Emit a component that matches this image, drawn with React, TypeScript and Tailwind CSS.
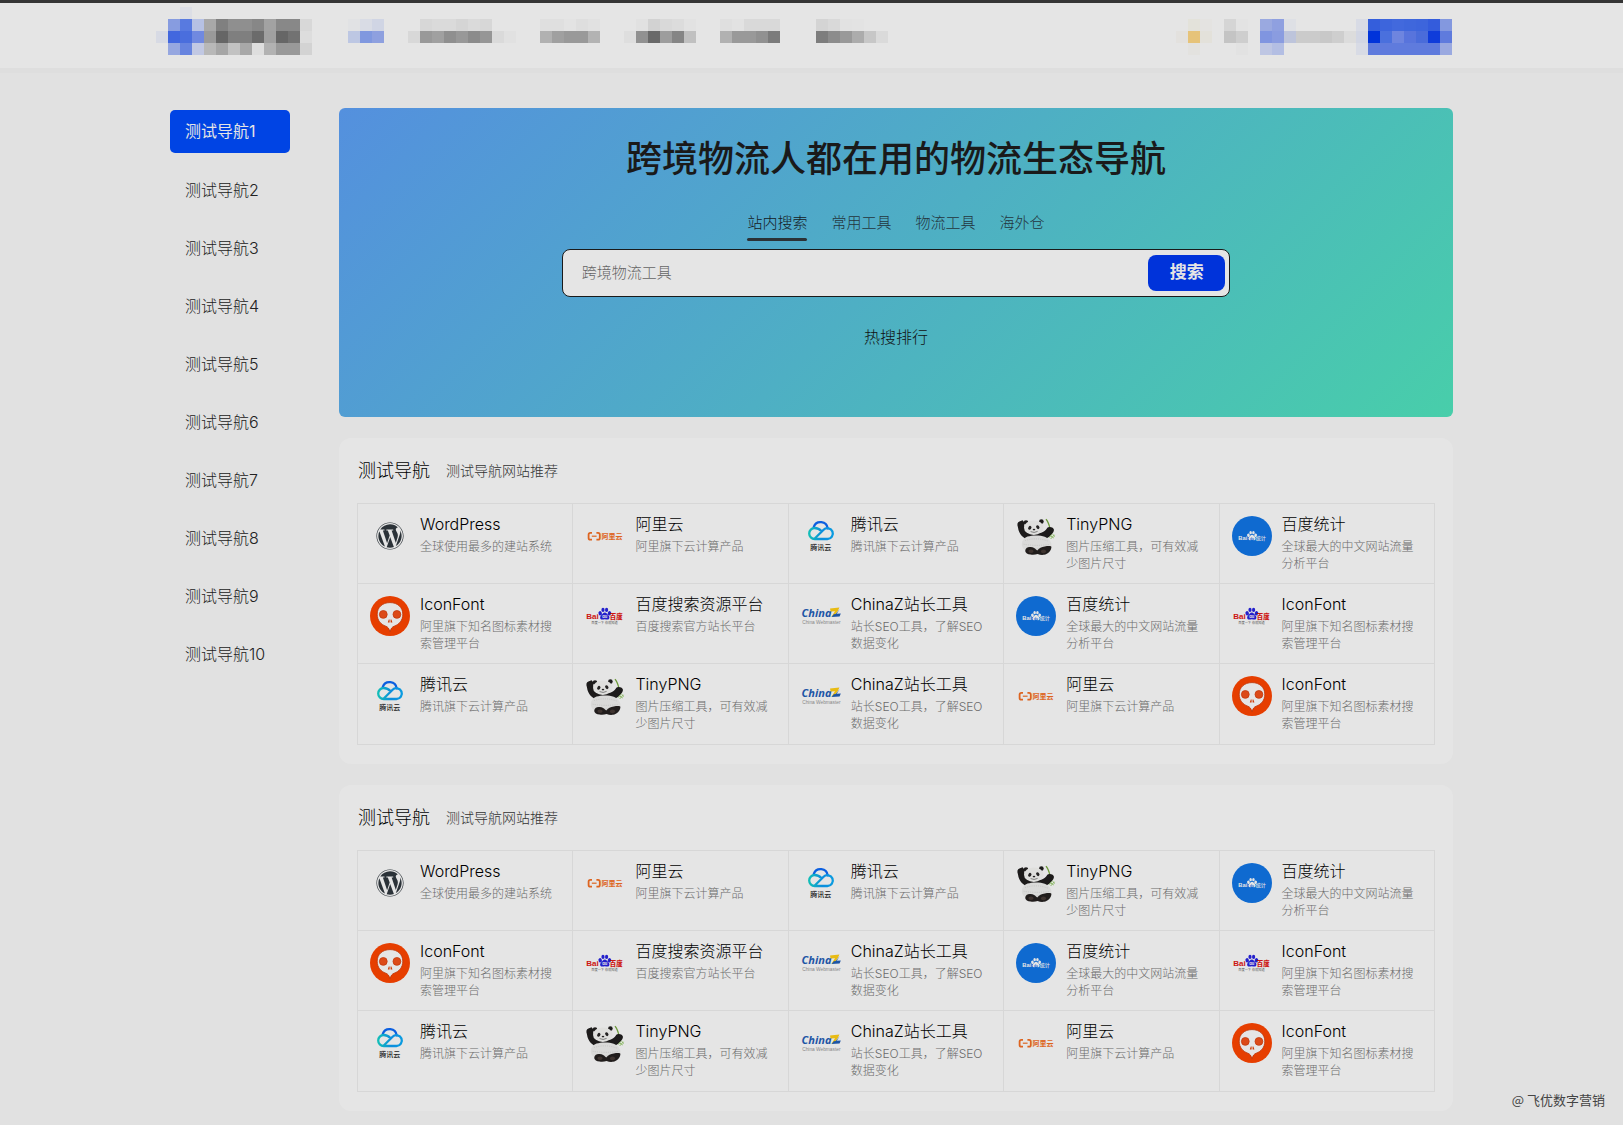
import type { ReactNode } from 'react'
import { FaWordpress } from 'react-icons/fa'

type SiteKey = 'wordpress' | 'aliyun' | 'tencent' | 'tinypng' | 'tongji' | 'iconfont' | 'baidu' | 'chinaz'

interface Site {
  name: string
  desc: string
  icon: ReactNode
}

const navItems = Array.from({ length: 10 }, (_, i) => `测试导航${i + 1}`)
const searchTabs = ['站内搜索', '常用工具', '物流工具', '海外仓']

const CELL = 12

// One string per row, colours separated by spaces, "-" leaves a cell empty
function Mosaic({ rows }: { rows: string[] }) {
  const cells = rows.map((row) => row.split(' '))
  const width = cells[0].length * CELL
  const height = cells.length * CELL
  return (
    <svg width={width} height={height} viewBox={`0 0 ${width} ${height}`} shapeRendering="crispEdges" aria-hidden="true">
      {cells.map((row, y) =>
        row.map((fill, x) =>
          fill === '-' ? null : <rect key={`${x}-${y}`} x={x * CELL} y={y * CELL} width={CELL} height={CELL} fill={fill} />
        )
      )}
    </svg>
  )
}

const logoRows = [
  '- - #dcdee5 - - - - - - - - - -',
  '- #879ce0 #587ae0 #b6c1e4 #a8a8a8 #808080 #8f8f8f #8f8f8f #878787 #a2a2a2 #888888 #888888 #d8d8d8',
  '#d7dae4 #4267de #4a6edd #7089e0 #9a9a9a #666666 #7f7f7f #7f7f7f #6b6b6b #a0a0a0 #666666 #727272 #dddddd',
  '- #96a7e0 #6784df #c1c8e3 #b8b8b8 #a6a6a6 #c2c2c2 #a8a8a8 #dedede #b2b2b2 #999999 #999999 #d3d3d3',
]

const menuRows = [
  ['#e1e2e4 #d9dce5 #d0d5e4', '#bdc7e3 #8098df #8ea0df', '- - -'],
  [
    '- #d7d7d7 #dadada #dadada #d5d5d5 #dadada #d7d7d7 - -',
    '#d8d8d8 #999999 #a0a0a0 #8f8f8f #989898 #8b8b8b #969696 #dadada #e1e1e1',
    '- - - - - - - - -',
  ],
  ['#dfdfdf #dfdfdf #e3e3e3 #dedede #e1e1e1', '#b1b1b1 #a0a0a0 #999999 #999999 #b3b3b3', '- - - - -'],
  ['- #e1e1e1 #d2d2d2 #d9d9d9 #dcdcdc #e2e2e2', '#dedede #919191 #696969 #9d9d9d #858585 #c0c0c0', '- - - - - -'],
  ['#dfdfdf #e2e2e2 #d9d9d9 #d9d9d9 #d9d9d9', '#b1b1b1 #999999 #999999 #919191 #7b7b7b', '- - - - -'],
  ['#d4d4d4 #d9d9d9 #e2e2e2 #e3e3e3 - -', '#7d7d7d #8c8c8c #999999 #acacac #c7c7c7 #dadada', '- - - - - -'],
]

const toolRows = [
  ['- #e3e2da #e4e3e1', '#e3e1de #e6c379 #e3e1da', '- #e3e2df -'],
  ['#d5d5d5 #e3e3e3', '#c4c4c4 #cecece', '- #e2e2e2'],
  [
    '#9aa9e0 #8fa0e0 #dee0e5 - - - - -',
    '#8095e0 #8a9ce0 #bdc4db #cbcbcb #cbcbcb #c8c8c8 #cecece #dcdcdc',
    '#bec6e3 #b3bee3 - - - - - -',
  ],
  [
    '#d8dbe5 #345edc #3d65dc #4269dd #3f67dc #3d65dc #345cdc #8398df',
    '#d2d6e3 #0033da #4a70dd #6e85df #5874dc #4a6cda #0f3cda #5f7bdd',
    '#d8dbe5 #5f7bdd #5f7bdd #5f7bdd #5f7bdd #5f7bdd #5f7bdd #9aa9e0',
  ],
]

function AliyunLogo() {
  return (
    <svg viewBox="0 0 40 40" className="size-10">
      <g fill="none" stroke="#dd6420" strokeWidth="1.8">
        <path d="M7 16.8H5.4Q3.6 16.8 3.6 18.6v3.3Q3.6 23.7 5.4 23.7H7" />
        <path d="M11.4 16.8H13Q14.8 16.8 14.8 18.6v3.3Q14.8 23.7 13 23.7h-1.6" />
        <path d="M6.8 20.2h4.8" strokeWidth="1.2" />
      </g>
      <text x="16.6" y="23" fontSize="7" fontWeight="700" fill="#dd6420">阿里云</text>
    </svg>
  )
}

function TencentLogo({ id }: { id: string }) {
  return (
    <svg viewBox="0 0 40 40" className="size-10">
      <defs>
        <linearGradient id={id} x1="0" x2="1" y1="0" y2="0">
          <stop offset="0" stopColor="#12bdb8" />
          <stop offset="0.55" stopColor="#0c8ddd" />
          <stop offset="1" stopColor="#0a9be0" />
        </linearGradient>
      </defs>
      <g fill="none" strokeWidth="2.3" strokeLinecap="round">
        <path d="M12.8 10.8a7.2 7.2 0 0 1 13.9 1.6" stroke="#0c5fe0" />
        <path d="M20.6 15.2C18.3 12.7 16.2 12 13.7 12a5.5 5.5 0 0 0 0 11h12.7a5.4 5.4 0 1 0-3.8-9.2L13.5 22.8" stroke={`url(#${id})`} />
      </g>
      <text x="19.8" y="34" fontSize="7" fontWeight="500" textAnchor="middle" fill="#222222">腾讯云</text>
    </svg>
  )
}

function Paw({ fill }: { fill: string }) {
  return (
    <g fill={fill}>
      <ellipse cx="15.2" cy="17.3" rx="1.7" ry="2.2" transform="rotate(-20 15.2 17.3)" />
      <ellipse cx="18" cy="13.9" rx="1.6" ry="2.1" />
      <ellipse cx="21.6" cy="13.9" rx="1.6" ry="2.1" />
      <ellipse cx="24.4" cy="17.3" rx="1.7" ry="2.2" transform="rotate(20 24.4 17.3)" />
      <path d="M19.8 16.6c1.7 0 2.3 1.5 3.5 2.6 1.7 1.5 1.5 4.1-.6 4.4-1 .1-1.8-.3-2.9-.3s-1.9.4-2.9.3c-2.1-.3-2.3-2.9-.6-4.4 1.2-1.1 1.8-2.6 3.5-2.6z" />
    </g>
  )
}

function BaiduLogo() {
  return (
    <svg viewBox="0 0 40 40" className="size-10">
      <text x="1.2" y="22.7" fontSize="8" fontWeight="700" fill="#cc1512" fontFamily="Liberation Sans">Bai</text>
      <Paw fill="#2420cc" />
      <text x="19.8" y="22.4" fontSize="4" fontWeight="700" textAnchor="middle" fill="#e5e5e5">du</text>
      <text x="24.8" y="22.9" fontSize="6.4" fontWeight="900" fill="#cc1512">百度</text>
      <text x="19.5" y="28.2" fontSize="3.2" textAnchor="middle" fill="#555555">百度一下 你就知道</text>
    </svg>
  )
}

function TongjiLogo() {
  return (
    <svg viewBox="0 0 40 40" className="size-10">
      <circle cx="20" cy="20" r="20" fill="#0f6ad0" />
      <text x="6.3" y="23.9" fontSize="5.8" fontWeight="700" fill="#e5e5e5" fontFamily="Liberation Sans">Bai</text>
      <g transform="translate(4.6 5.8) scale(.78)">
        <Paw fill="#e5e5e5" />
      </g>
      <text x="20" y="23.5" fontSize="3" fontWeight="700" textAnchor="middle" fill="#0f6ad0">du</text>
      <text x="23.8" y="23.9" fontSize="5" fontWeight="500" fill="#e5e5e5">统计</text>
    </svg>
  )
}

function ChinazLogo() {
  return (
    <svg viewBox="0 0 40 40" className="size-10">
      <text x="0.6" y="21.2" fontSize="11" fontWeight="700" fontStyle="italic" fill="#1d55a5" fontFamily="Open Sans">China</text>
      <path d="M29 12.4l9.4-.8-1.2 2.6-4 6.2-2.8.4 3.6-5.6-4.4.3z" fill="#e8bb13" />
      <path d="M38.6 13.2l-2.8 4.6 4-.3-1.2 2.9-8 .6 2.2-2.8 2-.2z" fill="#1d55a5" />
      <text x="1.2" y="28" fontSize="4.8" fill="#888888" fontFamily="Liberation Sans">China Webmaster</text>
    </svg>
  )
}

function IconFontLogo() {
  return (
    <svg viewBox="0 0 40 40" className="size-10">
      <circle cx="20" cy="20" r="20" fill="#e63e00" />
      <path d="M20 6.6c7.6 0 12.8 4.8 12.8 11.6 0 6.2-3.6 10.2-8.6 12-2.2.9-3.2 2.1-4.2 5.6-1-3.5-2-4.7-4.2-5.6-5-1.8-8.6-5.8-8.6-12C7.2 11.4 12.4 6.6 20 6.6z" fill="#e5e5e5" stroke="#bd3000" strokeWidth=".8" />
      <circle cx="13.3" cy="18.4" r="3.9" fill="#dc4a18" stroke="#c43a0c" strokeWidth=".8" />
      <circle cx="26.9" cy="18.4" r="3.9" fill="#dc4a18" stroke="#c43a0c" strokeWidth=".8" />
      <path d="M17.8 26.4l1-3h.8v3zM22.4 26.4l-1-3h-.8v3z" fill="#cf3800" />
    </svg>
  )
}

function PandaLogo() {
  return (
    <svg viewBox="0 0 40 40" className="size-10">
      <path d="M30 3.2c2.2 2.600 3.200 5.800 4 9.400" fill="none" stroke="#6d9a3a" strokeWidth="1.3" />
      <path d="M2 11.5C.8 8.4 1.4 6.4 3.4 5.6l3.2-1.4 1.8 2.4c-.6 3.2.2 5.8 2.6 7.8l14 2.4c2.8-.8 4.6-2.4 6.2-4.8 1.2-1.6 5.6-1.4 6.6 1.2.8 2-2 5.6-4.6 7.6-2 1.6-4.6 2.8-7.6 3.2H12.4C7.4 22.4 2.8 18.2 2 11.5z" fill="#1d1b1b" />
      <path d="M33.2 21.6l2.6-3.2M34.6 23l3.8-4.2M36.4 18l2.6 2.6M34.4 19.8l3.4 2.2" fill="none" stroke="#86b55c" strokeWidth=".9" />
      <path d="M11.5 20.6c4.8-1.6 13-1.6 17.2.2 4.4 2 7.3 5.6 6.6 9.2-.6 3-4.4 5-8.6 5.4H13.5C9 34.8 5.6 32 5.8 28c.2-3.4 2.3-6.2 5.7-7.4z" fill="#dadad9" />
      <path d="M9 24.5q11.5-3.6 23 .6M7.6 28.2q12.4 2.2 26 .2M10.5 31.8q9.500 1.800 20-.2" fill="none" stroke="#c0c0be" strokeWidth=".8" strokeDasharray="1 1.2" />
      <circle cx="10" cy="6.6" r="2.3" fill="#1d1b1b" />
      <circle cx="25.4" cy="5.6" r="2.3" fill="#1d1b1b" />
      <ellipse cx="17.800" cy="11.700" rx="9.800" ry="7.300" fill="#dfdfdd" />
      <ellipse cx="13.8" cy="11.8" rx="1.5" ry="2" fill="#242222" transform="rotate(35 13.8 11.8)" />
      <ellipse cx="21.8" cy="11.2" rx="1.5" ry="2" fill="#242222" transform="rotate(-35 21.8 11.2)" />
      <ellipse cx="18" cy="13.6" rx="1.3" ry=".8" fill="#242222" />
      <path d="M14.6 15.6q3.6 1.800 7-.2" fill="none" stroke="#555555" strokeWidth=".7" />
      <path d="M9.2 35c.2-3 2.6-4.4 5.4-4 2.6.2 4.8 1.6 6.6 3.6 1.8-2.4 4.4-4 7.6-4.2 2.4-.2 6.4-.8 6.6.4.2 3.6-3.4 7.4-7.4 8-2.2.4-4.4 0-6.4-.8-2.2.8-4.6 1-7 .6-3-.4-5.2-1.6-5.4-3.6z" fill="#211d1c" />
      <ellipse cx="15" cy="35.2" rx="2.6" ry="1.8" fill="#3f3430" />
      <ellipse cx="27.5" cy="35.4" rx="2.6" ry="1.8" fill="#3f3430" />
    </svg>
  )
}

function getSite(key: SiteKey, id: string): Site {
  switch (key) {
    case 'wordpress':
      return {
        name: 'WordPress',
        desc: '全球使用最多的建站系统',
        icon: <FaWordpress className="size-7 text-[#2b3238]" />,
      }
    case 'aliyun':
      return { name: '阿里云', desc: '阿里旗下云计算产品', icon: <AliyunLogo /> }
    case 'tencent':
      return { name: '腾讯云', desc: '腾讯旗下云计算产品', icon: <TencentLogo id={id} /> }
    case 'tinypng':
      return { name: 'TinyPNG', desc: '图片压缩工具，可有效减少图片尺寸', icon: <PandaLogo /> }
    case 'tongji':
      return { name: '百度统计', desc: '全球最大的中文网站流量分析平台', icon: <TongjiLogo /> }
    case 'iconfont':
      return { name: 'IconFont', desc: '阿里旗下知名图标素材搜索管理平台', icon: <IconFontLogo /> }
    case 'baidu':
      return { name: '百度搜索资源平台', desc: '百度搜索官方站长平台', icon: <BaiduLogo /> }
    case 'chinaz':
      return { name: 'ChinaZ站长工具', desc: '站长SEO工具，了解SEO数据变化', icon: <ChinazLogo /> }
  }
}

function buildSites(prefix: string): Site[] {
  const keys: SiteKey[] = [
    'wordpress', 'aliyun', 'tencent', 'tinypng', 'tongji',
    'iconfont', 'baidu', 'chinaz', 'tongji', 'iconfont',
    'tencent', 'tinypng', 'chinaz', 'aliyun', 'iconfont',
  ]
  const sites = keys.map((key, i) => getSite(key, `${prefix}-${i}`))
  // this entry carries the Baidu logo
  sites[9] = { ...sites[9], icon: <BaiduLogo /> }
  return sites
}

function Header() {
  return (
    <header className="border-t-3 border-[#353535] bg-[#e5e5e5]">
      <div className="mx-auto flex max-w-[1283px] items-end justify-between pt-1 pb-[13px]">
        <div className="-ml-3.5 flex items-end">
          <a href="#" aria-label="首页" className="mr-9">
            <Mosaic rows={logoRows} />
          </a>
          <nav className="flex gap-6">
            {menuRows.map((rows, i) => (
              <a key={i} href="#" aria-label={`菜单${i + 1}`} className="last:ml-3">
                <Mosaic rows={rows} />
              </a>
            ))}
          </nav>
        </div>
        <div className="mr-px flex">
          <div className="mr-3 flex gap-3">
            <Mosaic rows={toolRows[0]} />
            <Mosaic rows={toolRows[1]} />
          </div>
          <button type="button" aria-label="账户">
            <Mosaic rows={toolRows[2]} />
          </button>
          <button type="button" aria-label="登录">
            <Mosaic rows={toolRows[3]} />
          </button>
        </div>
      </div>
    </header>
  )
}

function Sidebar() {
  return (
    <nav className="mt-0.5 flex w-[120px] shrink-0 flex-col gap-[15px]">
      {navItems.map((item, i) => (
        <a
          key={item}
          href="#"
          className={
            i === 0
              ? 'mb-px rounded-[5px] bg-[#0044e4] px-[15px] py-[9px] text-base leading-[25px] text-[#e5e5e5]'
              : 'px-[15px] py-[9px] text-base leading-[25px] font-light text-[#222222]'
          }
        >
          {item}
        </a>
      ))}
    </nav>
  )
}

function Hero() {
  return (
    <section className="flex flex-col items-center rounded-md bg-[linear-gradient(135deg,#5490de,#48ceaa)] pt-6 pb-[68px]">
      <h1 className="text-4xl leading-[54px] font-medium text-[#1a1a1a]">跨境物流人都在用的物流生态导航</h1>
      <div className="mt-[26px] flex gap-6 text-[15px] leading-[22px] font-light">
        {searchTabs.map((tab, i) => (
          <button
            key={tab}
            type="button"
            className={
              i === 0
                ? 'pb-1 text-[#151a1e] after:mt-1 after:-mb-[7px] after:block after:h-[3px] after:rounded-full after:bg-[#2b3236]'
                : 'pb-1 text-[#24363e]'
            }
          >
            {tab}
          </button>
        ))}
      </div>
      <form className="mt-[11px] flex h-12 w-3/5 items-center rounded-lg border border-[#1a1a1a] bg-[#e5e5e5] pr-1 pl-[19px]">
        <input
          type="text"
          aria-label="搜索"
          placeholder="跨境物流工具"
          className="min-w-0 flex-1 bg-transparent text-[15px] font-light text-[#1a1a1a] outline-none placeholder:text-[#666666]"
        />
        <button type="button" className="h-9 w-[77px] rounded-lg bg-[#0033da] text-[17px] font-bold text-[#e5e5e5]">
          搜索
        </button>
      </form>
      <p className="mt-7 text-base leading-6 font-light text-[#111111]">热搜排行</p>
    </section>
  )
}

function SiteCard({ site }: { site: Site }) {
  return (
    <a href="#" className="flex gap-2.5 border-r border-b border-[#d7d7d7] px-3 pt-2">
      <span className="mt-1 flex size-10 shrink-0 items-center justify-center">{site.icon}</span>
      <span className="min-w-0">
        <span className="block text-base leading-6 font-light text-black">{site.name}</span>
        <span className="mt-0.5 block text-xs leading-[17px] font-light text-[#6b6b6b]">{site.desc}</span>
      </span>
    </a>
  )
}

function SiteSection({ sites }: { sites: Site[] }) {
  return (
    <section className="rounded-xl bg-[#e5e5e5] px-[18px] pb-[19px]">
      <div className="flex h-[65px] items-center gap-4 pl-px">
        <h2 className="text-lg font-light text-black">测试导航</h2>
        <p className="text-sm font-light text-[#333333]">测试导航网站推荐</p>
      </div>
      <div className="grid grid-cols-5 grid-rows-[80px_80px_81px] border-t border-l border-[#d7d7d7]">
        {sites.map((site, i) => (
          <SiteCard key={i} site={site} />
        ))}
      </div>
    </section>
  )
}

export default function App() {
  return (
    <div className="relative min-h-screen bg-[#e1e1e1] font-['Inter','Noto_Sans_CJK_SC',sans-serif]" lang="zh-CN">
      <Header />
      <div className="h-[5px] bg-[#dedede]" />
      <div className="mx-auto flex max-w-[1283px] gap-[49px] pt-[35px] pb-3">
        <Sidebar />
        <main className="flex min-w-0 flex-1 flex-col gap-[21px]">
          <Hero />
          <SiteSection sites={buildSites('first')} />
          <SiteSection sites={buildSites('second')} />
        </main>
      </div>
      <p className="absolute right-[18px] bottom-4 font-['Noto_Sans_CJK_SC',sans-serif] text-[13px] leading-[18px] text-[#444444]">
        @ 飞优数字营销
      </p>
    </div>
  )
}
